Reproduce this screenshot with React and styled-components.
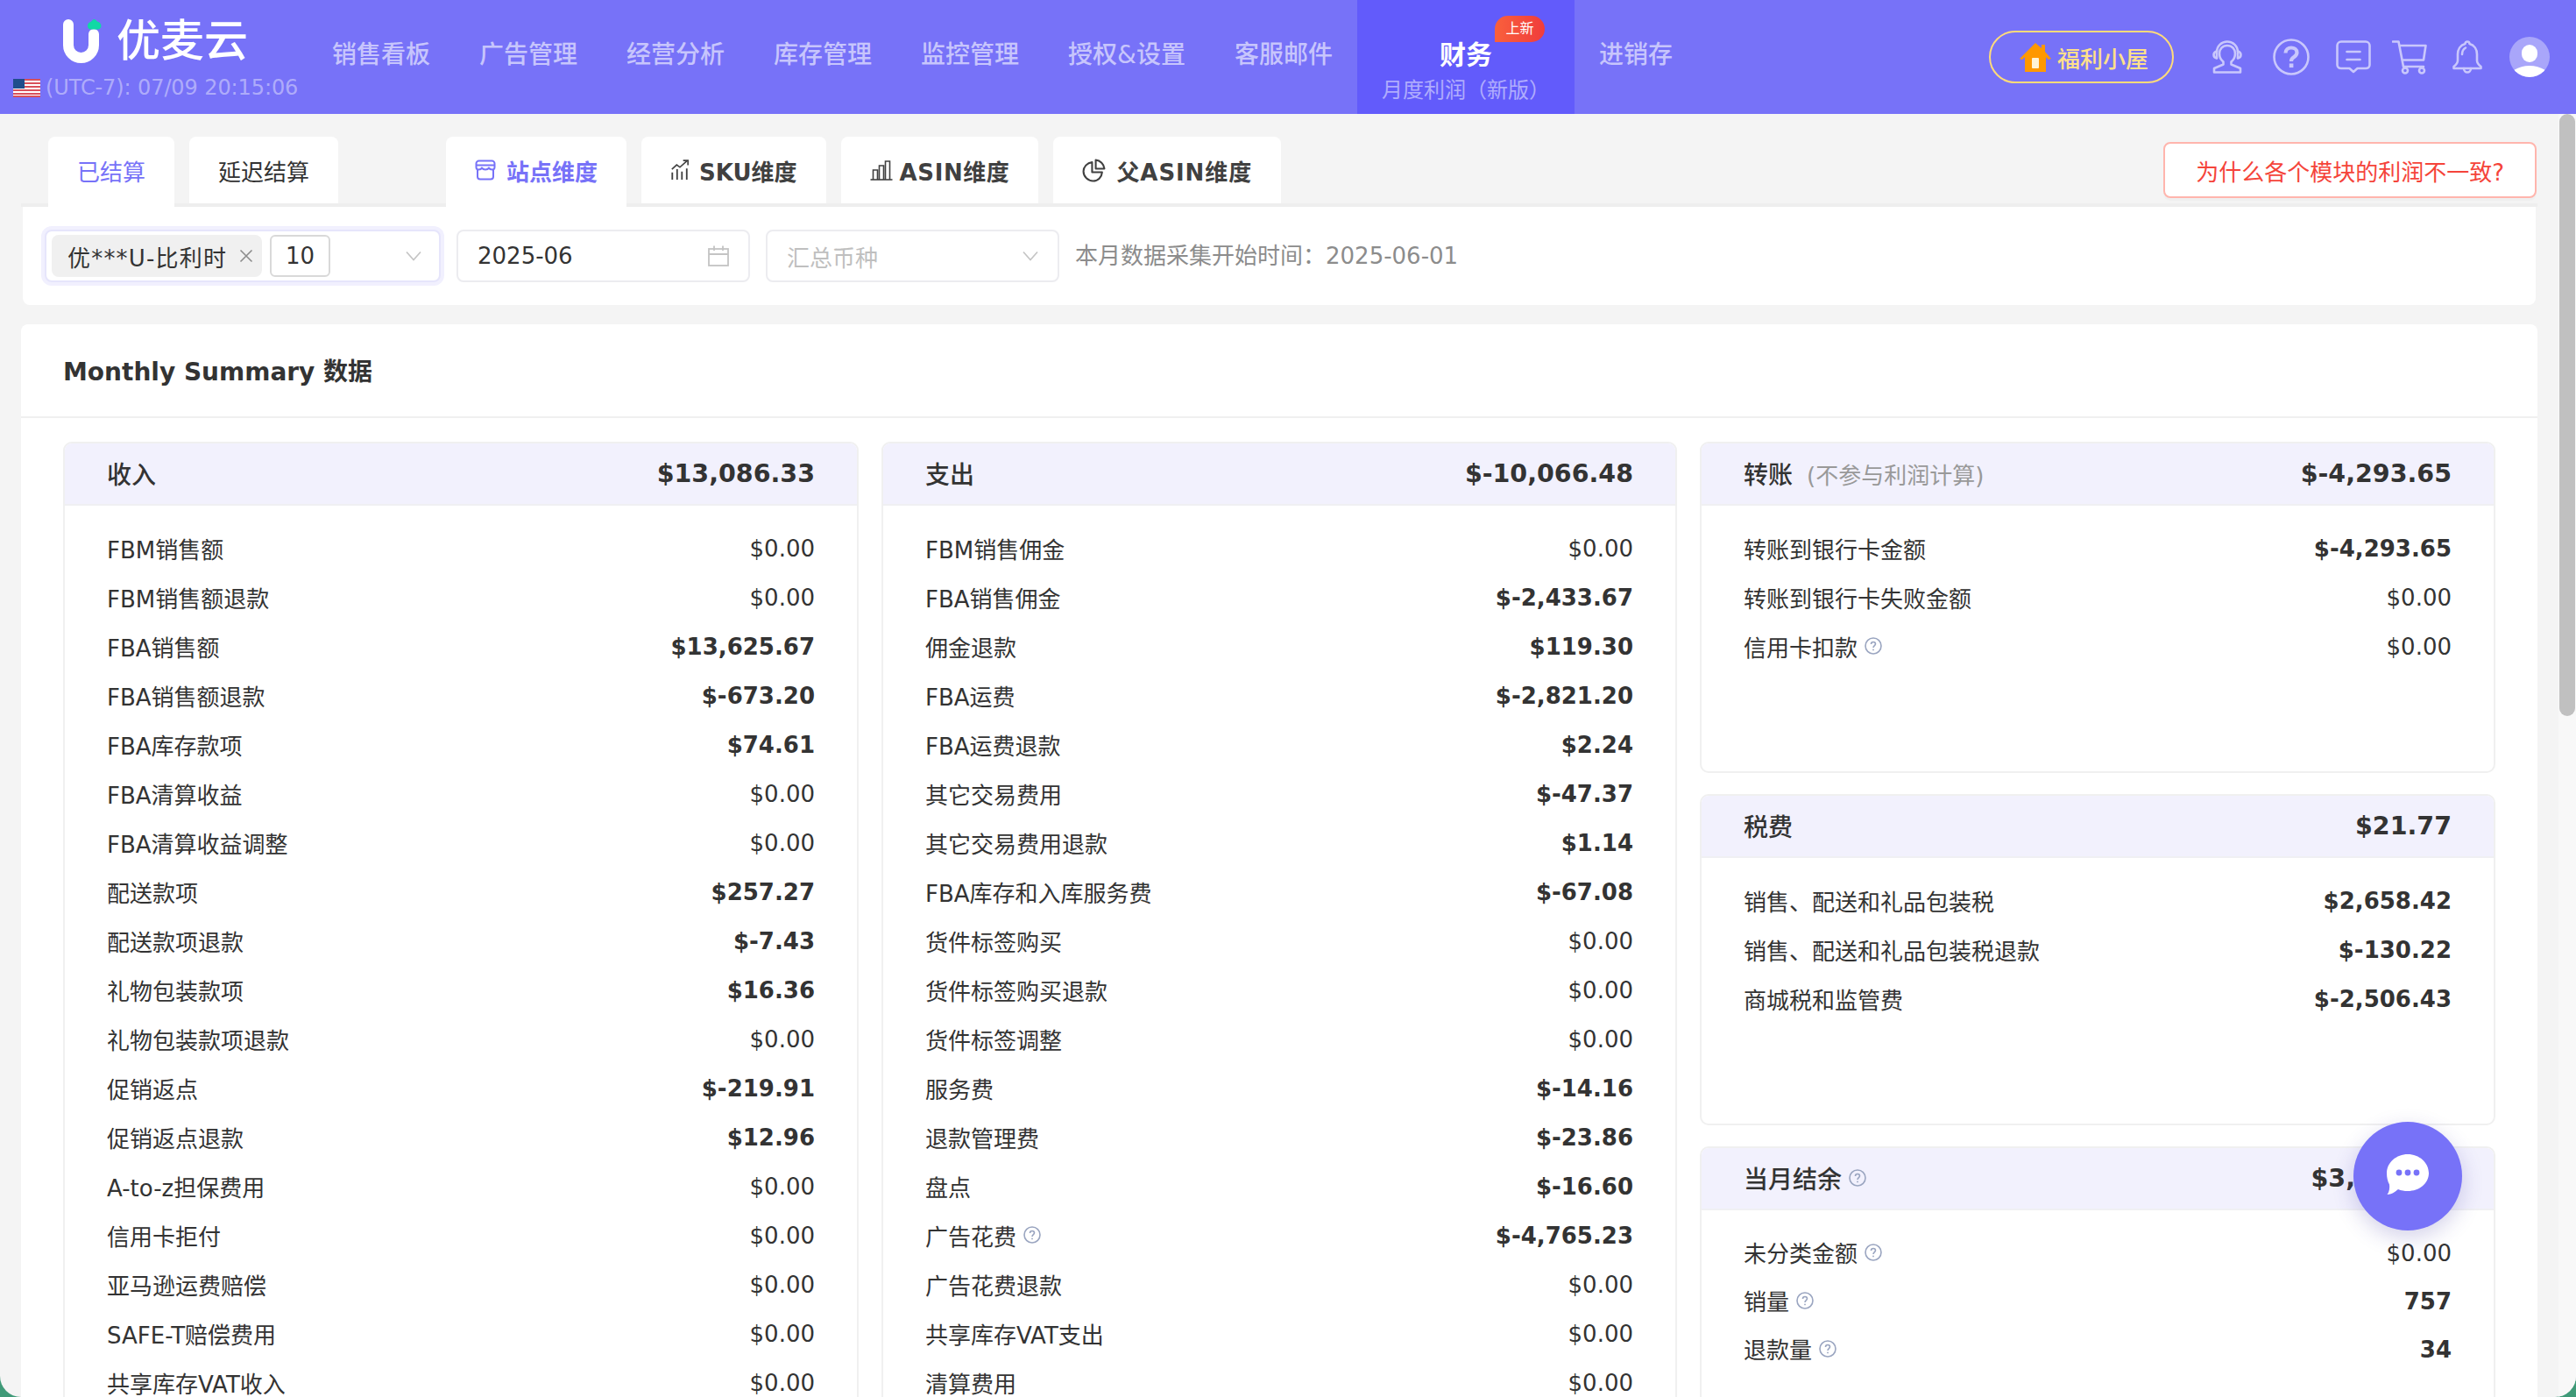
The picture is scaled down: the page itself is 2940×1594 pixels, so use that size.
import React from "react";
import styled, { createGlobalStyle } from "styled-components";

const PURPLE = "#7772f8";

const Global = createGlobalStyle`
  html, body { margin: 0; height: 100%; background: #3f9a78; }
  #root { height: 100%; }
  * { box-sizing: border-box; }
  body { font-family: "DejaVu Sans", "Noto Sans CJK SC", sans-serif; color: #333; }
`;

const Frame = styled.div`
  position: relative;
  height: 100vh;
  display: flex;
  flex-direction: column;
  overflow: hidden;
  border-radius: 0 0 24px 24px;
  background: #f4f4f4;
`;

/* ---------- header ---------- */
const Header = styled.header`
  height: 130px;
  flex: none;
  display: flex;
  align-items: stretch;
  background: ${PURPLE};
`;
const Brand = styled.div`
  width: 351px;
  flex: none;
  display: flex;
  flex-direction: column;
`;
const LogoRow = styled.div`
  display: flex;
  align-items: flex-start;
  gap: 17px;
  padding: 22px 0 0 72px;
  height: 86px;
`;
const LogoText = styled.span`
  font-size: 50px;
  font-weight: 500;
  line-height: 50px;
  color: #fff;
`;
const ClockRow = styled.div`
  display: flex;
  align-items: center;
  gap: 6px;
  padding-left: 15px;
  font-size: 24px;
  letter-spacing: -0.1px;
  line-height: 28px;
  color: rgba(255, 255, 255, 0.42);
  white-space: nowrap;
`;
const Nav = styled.nav`
  display: flex;
  align-items: stretch;
`;
const NavItem = styled.div`
  position: relative;
  display: flex;
  flex-direction: column;
  align-items: center;
  padding: 43px 28px 0;
  font-size: 28px;
  font-weight: 500;
  line-height: 40px;
  white-space: nowrap;
  color: ${(p) => (p.$active ? "#fff" : "rgba(255,255,255,0.6)")};
  background: ${(p) => (p.$active ? "#625bfb" : "transparent")};
`;
const NavStrong = styled.span`
  font-size: 30px;
  font-weight: 700;
`;
const NavSub = styled.span`
  font-size: 24px;
  font-weight: 400;
  line-height: 40px;
  color: rgba(255, 255, 255, 0.5);
`;
const NewBadge = styled.span`
  position: absolute;
  left: 157px;
  top: 18px;
  width: 57px;
  height: 30px;
  border-radius: 15px 15px 15px 0;
  background: linear-gradient(90deg, #f9603c, #f03c3c);
  color: #fff;
  font-size: 16px;
  font-weight: 400;
  line-height: 30px;
  text-align: center;
`;
const HeaderRight = styled.div`
  margin-left: auto;
  display: flex;
  align-items: center;
  padding: 0 30px 0 0;
  height: 130px;
`;
const WelfareButton = styled.div`
  display: flex;
  align-items: center;
  gap: 7px;
  height: 60px;
  width: 211px;
  padding-left: 33px;
  margin-right: 44px;
  border: 2px solid #ffdb7a;
  border-radius: 30px;
  color: #ffe08a;
  font-size: 26px;
  font-weight: 500;
  white-space: nowrap;
`;
const IconSlot = styled.span`
  display: flex;
  margin-right: ${(p) => p.$gap || 0}px;
  color: #c9c7fc;
`;

/* ---------- page body ---------- */
const BodyRow = styled.div`
  flex: 1;
  min-height: 0;
  display: flex;
`;
const Scroller = styled.main`
  flex: 1;
  min-width: 0;
  overflow: hidden;
  padding: 26px 24px 0;
`;
const ScrollRail = styled.div`
  flex: none;
  width: 20px;
  background: #f8f8f8;
`;
const ScrollThumb = styled.div`
  width: 18px;
  height: 687px;
  margin-left: 1px;
  background: #c0c0c0;
  border-radius: 9px;
`;
const TabsBar = styled.div`
  display: flex;
  align-items: flex-start;
  height: 80px;
  border-bottom: 4px solid #eeeeee;
  padding-left: 31px;
`;
const TabGroup = styled.div`
  display: flex;
  gap: 17px;
  margin-right: ${(p) => p.$gap || 0}px;
`;
const Tab = styled.div`
  display: flex;
  align-items: center;
  gap: ${(p) => p.$gap ?? 10}px;
  height: ${(p) => (p.$active ? "80px" : "76px")};
  padding: ${(p) => (p.$active ? "0 33px 4px" : "0 33px")};
  background: #fff;
  border-radius: 8px 8px 0 0;
  font-size: 26px;
  font-weight: ${(p) => (p.$bold ? 700 : 400)};
  letter-spacing: ${(p) => p.$track || 0}px;
  color: ${(p) => (p.$active ? PURPLE : p.$bold ? "#404040" : "#333")};
  white-space: nowrap;
`;
const WhyButton = styled.div`
  margin: 6px 1px 0 auto;
  height: 64px;
  padding: 0 35px;
  display: flex;
  align-items: center;
  background: #fff;
  border: 2px solid #ffb5ad;
  border-radius: 8px;
  box-shadow: 0 3px 0 rgba(0, 0, 0, 0.02);
  color: #f5443a;
  font-size: 26px;
  white-space: nowrap;
`;
const FilterCard = styled.section`
  height: 112px;
  margin: 0 2px;
  padding: 26px 25px;
  display: flex;
  align-items: flex-start;
  gap: 18px;
  background: #fff;
  border-radius: 0 0 8px 8px;
`;
const Field = styled.div`
  display: flex;
  align-items: center;
  height: 60px;
  width: ${(p) => p.$w}px;
  padding: ${(p) => p.$pad || "0 22px"};
  background: #fff;
  border: 2px solid ${(p) => (p.$focus ? "#e6e5fb" : "#ececf0")};
  border-radius: 8px;
  font-size: 26px;
  color: ${(p) => (p.$muted ? "#bfbfbf" : "#333")};
  box-shadow: ${(p) => (p.$focus ? "0 0 0 4px #f1f0fe" : "none")};
`;
const ChosenTag = styled.span`
  display: flex;
  align-items: center;
  justify-content: space-between;
  width: 240px;
  height: 48px;
  padding: 0 10px 0 18px;
  background: #f0f0f0;
  border-radius: 8px;
  font-size: 26px;
  letter-spacing: 1.2px;
  white-space: nowrap;
`;
const CountBox = styled.span`
  display: flex;
  align-items: center;
  justify-content: center;
  width: 69px;
  height: 48px;
  margin-left: 9px;
  border: 2px solid #d9d9d9;
  border-radius: 6px;
  font-size: 26px;
`;
const FieldIcon = styled.span`
  display: flex;
  margin-left: auto;
  color: #c4c4c4;
`;
const Info = styled.span`
  height: 60px;
  line-height: 60px;
  font-size: 26px;
  color: #8c8c8c;
  white-space: nowrap;
`;
const SummaryCard = styled.section`
  margin-top: 22px;
  min-height: 2700px;
  background: #fff;
  border-radius: 8px;
  display: flex;
  flex-direction: column;
`;
const SummaryTitle = styled.h2`
  margin: 0;
  height: 107px;
  padding: 0 48px 2px;
  display: flex;
  align-items: center;
  gap: 10px;
  border-bottom: 2px solid #f0f0f0;
  font-size: 28px;
  font-weight: 700;
  color: #333;
`;
const Columns = styled.div`
  flex: 1;
  display: grid;
  grid-template-columns: repeat(3, 1fr);
  gap: 26px;
  padding: 27px 48px 26px;
`;
const Stack = styled.div`
  display: flex;
  flex-direction: column;
  gap: 24px;
`;
const Panel = styled.article`
  flex: ${(p) => (p.$fill ? 1 : "none")};
  height: ${(p) => (p.$h ? `${p.$h}px` : "auto")};
  border: 2px solid #f0f0f0;
  border-radius: 10px;
  overflow: hidden;
`;
const PanelHead = styled.header`
  height: 72px;
  margin: -1px 0 0;
  padding: 0 48px;
  display: flex;
  align-items: center;
  justify-content: space-between;
  background: #f2f1fd;
  border-bottom: 2px solid #f0f0f3;
  font-size: 28px;
  font-weight: 500;
  white-space: nowrap;
`;
const HeadLabel = styled.span`
  display: flex;
  align-items: center;
  gap: 8px;
`;
const HeadNote = styled.span`
  margin-left: 8px;
  font-size: 26px;
  font-weight: 400;
  color: #999;
`;
const HeadValue = styled.span`
  font-size: 28.5px;
  font-weight: 700;
  color: #333;
`;
const PanelBody = styled.div`
  padding: 20px 48px;
`;
const Row = styled.div`
  height: ${(p) => p.$h || 56}px;
  display: flex;
  align-items: center;
  justify-content: space-between;
  font-size: 26px;
  color: #333;
  white-space: nowrap;
`;
const RowLabel = styled.span`
  display: flex;
  align-items: center;
  gap: 8px;
`;
const RowValue = styled.span`
  padding-top: 2px;
  font-weight: ${(p) => (p.$bold ? 700 : 400)};
`;

/* ---------- overlays ---------- */
const WatermarkLayer = styled.div`
  position: absolute;
  left: -40px;
  right: 0;
  top: 130px;
  bottom: 0;
  display: flex;
  overflow: hidden;
  pointer-events: none;
`;
const WatermarkColumn = styled.div`
  flex: none;
  width: 145px;
  margin-top: ${(p) => p.$offset}px;
`;
const WatermarkText = styled.div`
  height: 110px;
  display: flex;
  align-items: center;
  justify-content: center;
  font-size: 24px;
  color: rgba(0, 0, 0, 0.022);
  transform: rotate(-32deg);
`;
const ChatFab = styled.div`
  position: absolute;
  left: 2686px;
  top: 1280px;
  width: 124px;
  height: 124px;
  display: flex;
  align-items: center;
  justify-content: center;
  border-radius: 50%;
  background: ${PURPLE};
  box-shadow: 0 8px 24px rgba(60, 50, 160, 0.22);
`;

/* ---------- icons ---------- */
const LogoMark = () => (
  <svg width="44" height="52" viewBox="0 0 44 52">
    <path d="M6 6V29.5A14.5 14.5 0 0 0 35 29.5V17" fill="none" stroke="#fff" strokeWidth="12" strokeLinecap="round" />
    <path d="M35.5 0C37 0 38 1.5 39 2.5C41.5 3 43.5 5 43.5 7.5C43.5 10 41.5 11.5 39.5 11.5H31.5C29.5 11.5 28 10 28 7.5C28 5 29.5 3.5 31.5 3C33 1.5 34 0 35.5 0Z" fill="#10d9a5" />
  </svg>
);
const Flag = () => (
  <svg width="31" height="21" viewBox="0 0 31 21">
    <rect width="31" height="21" fill="#fff" />
    {[0, 4, 8, 12, 16].map((y) => (
      <rect key={y} y={y} width="31" height="2" fill="#d8505a" />
    ))}
    <rect y="19" width="31" height="2" fill="#d8505a" />
    <rect width="13" height="11" fill="#1f4e8c" />
  </svg>
);
const House = () => (
  <svg width="36" height="34" viewBox="0 0 36 34">
    <path d="M18 1L25 7V3H29V11L36 19L33 20L30 17V34H6V17L3 20L0 19Z" fill="#ff9800" />
    <rect x="14" y="18" width="8" height="12" rx="1" fill="#fff3d6" />
  </svg>
);
const Headset = () => (
  <svg width="34" height="38" viewBox="0 0 34 38" fill="none" stroke="currentColor" strokeWidth="2.6" strokeLinejoin="round" strokeLinecap="round">
    <path d="M17 6C11.5 6 8 10 8 15C8 19.5 10 22.5 12.5 24.5V27.5L2 32V36.5H32V32L21.5 27.5V24.5C24 22.5 26 19.5 26 15C26 10 22.5 6 17 6Z" />
    <path d="M5 20V13.5C5 6.5 10.5 1.5 17 1.5C23.5 1.5 29 6.5 29 13.5V20" />
    <path d="M5 12.5C3 13 1.5 14.5 1.5 16.5C1.5 18.5 3 20 5 20.5M29 12.5C31 13 32.5 14.5 32.5 16.5C32.5 18.5 31 20 29 20.5" />
  </svg>
);
const HelpRound = () => (
  <svg width="42" height="42" viewBox="0 0 42 42" fill="none" stroke="currentColor">
    <circle cx="21" cy="21" r="19.5" strokeWidth="2.6" />
    <path d="M14.5 16.5C14.5 12.5 17.5 10.5 21 10.5C24.5 10.5 27.5 12.5 27.5 16C27.5 19 25.5 20 23.5 21.5C22 22.5 21 23.5 21 26" strokeWidth="4.2" />
    <rect x="18.8" y="28.5" width="4.6" height="4.6" fill="currentColor" stroke="none" />
  </svg>
);
const MessageBox = () => (
  <svg width="40" height="38" viewBox="0 0 40 38" fill="none" stroke="currentColor" strokeWidth="2.6" strokeLinejoin="round" strokeLinecap="round">
    <path d="M6 1.5H34C36.5 1.5 38.5 3.5 38.5 6V28C38.5 30.5 36.5 32 34 32H24.5L20 36L15.5 32H6C3.5 32 1.5 30.5 1.5 28V6C1.5 3.5 3.5 1.5 6 1.5Z" />
    <path d="M12.5 13H27.5M12.5 22H27.5" />
  </svg>
);
const Cart = () => (
  <svg width="40" height="39" viewBox="0 0 40 39" fill="none" stroke="currentColor" strokeWidth="2.6" strokeLinejoin="round" strokeLinecap="round">
    <path d="M1 1.5H7.5L13 30H36" />
    <path d="M9 6H38.5L36 22.5H12" />
    <circle cx="15" cy="34.5" r="3" />
    <circle cx="34" cy="34.5" r="3" />
  </svg>
);
const Bell = () => (
  <svg width="34" height="38" viewBox="0 0 34 38" fill="none" stroke="currentColor" strokeWidth="2.6" strokeLinejoin="round" strokeLinecap="round">
    <path d="M17 1.5C18.5 1.5 19.5 2.5 19.5 4C25 5.5 28 10.5 28 16V23C28 26 30 28 32.5 30V32H1.5V30C4 28 6 26 6 23V16C6 10.5 9 5.5 14.5 4C14.5 2.5 15.5 1.5 17 1.5Z" />
    <path d="M13 32C13 35 15 36.5 17 36.5C19 36.5 21 35 21 32" />
    <path d="M11 16C11 12.5 12.5 10 15 8.5" />
  </svg>
);
const Avatar = () => (
  <svg width="46" height="46" viewBox="0 0 46 46">
    <defs>
      <clipPath id="avatarClip"><circle cx="23" cy="23" r="23" /></clipPath>
    </defs>
    <circle cx="23" cy="23" r="23" fill="#a9a6fa" />
    <rect x="14" y="9" width="18" height="20" rx="9" fill="#fff" />
    <ellipse cx="23" cy="48" rx="24" ry="15" fill="#fff" clipPath="url(#avatarClip)" />
  </svg>
);
const StoreIcon = () => (
  <svg width="24" height="24" viewBox="0 0 24 24" fill="none" stroke="currentColor" strokeWidth="2" strokeLinejoin="round">
    <path d="M4.5 1.5H19.5C21 1.5 22.5 3 22.5 4.5V9C22.5 10.5 21 11.5 19.5 11.5C18 11.5 16.5 10.5 16 9.5C15.5 10.5 13.8 11.5 12 11.5C10.2 11.5 8.5 10.5 8 9.5C7.5 10.5 6 11.5 4.5 11.5C3 11.5 1.5 10.5 1.5 9V4.5C1.5 3 3 1.5 4.5 1.5Z" />
    <path d="M1.5 6.5H22.5" />
    <path d="M3 11.5V19.5C3 21.3 4.2 22.5 6 22.5H18C19.8 22.5 21 21.3 21 19.5V11.5" />
  </svg>
);
const TrendIcon = () => (
  <svg width="22" height="24" viewBox="0 0 24 26" fill="none" stroke="currentColor" strokeWidth="2">
    <path d="M2 12L8 6.5L12 9.5L21 1.5" strokeWidth="1.8" />
    <path d="M16 1.2H22V7" strokeWidth="1.8" />
    <path d="M2.5 16V25M8.5 12V25M14.5 15V25M20.5 11V25" />
  </svg>
);
const BarsIcon = () => (
  <svg width="26" height="24" viewBox="0 0 26 24" fill="none" stroke="currentColor" strokeWidth="1.6">
    <path d="M0.5 23H25.5" />
    <path d="M3.5 23V12H8.5V23M10.5 23V7H15.5V23M17.5 23V2H22.5V23" />
  </svg>
);
const PieIcon = () => (
  <svg width="27" height="27" viewBox="0 0 26 26" fill="none" stroke="currentColor" strokeWidth="2" strokeLinejoin="round">
    <path d="M11 4C5.5 4.5 1.5 9 1.5 14C1.5 20 6.5 24.5 12 24.5C17.5 24.5 21.5 20.5 22 15H11Z" />
    <path d="M15 1.5C20 2 24 6 24.5 11H15Z" />
  </svg>
);
const Chevron = () => (
  <svg width="18" height="12" viewBox="0 0 18 12" fill="none" stroke="currentColor" strokeWidth="1.6">
    <path d="M1 1.5L9 10.5L17 1.5" />
  </svg>
);
const Cross = () => (
  <svg width="16" height="16" viewBox="0 0 16 16" fill="none" stroke="#8c8c8c" strokeWidth="1.6">
    <path d="M1.5 1.5L14.5 14.5M14.5 1.5L1.5 14.5" />
  </svg>
);
const CalendarIcon = () => (
  <svg width="24" height="24" viewBox="0 0 24 24" fill="none" stroke="currentColor" strokeWidth="1.8">
    <rect x="1" y="4" width="22" height="19" />
    <path d="M1 10H23M7 0.5V6M17 0.5V6" />
  </svg>
);
const HelpTip = () => (
  <svg width="20" height="20" viewBox="0 0 20 20" fill="none" stroke="#9aa5c0" strokeWidth="1.6">
    <circle cx="10" cy="10" r="9" />
    <path d="M7.5 8C7.5 6.5 8.6 5.5 10 5.5C11.4 5.5 12.5 6.5 12.5 7.8C12.5 9.5 10 9.8 10 12" />
    <circle cx="10" cy="14.4" r="0.9" fill="#9aa5c0" stroke="none" />
  </svg>
);
const ChatBubble = () => (
  <svg width="48" height="50" viewBox="0 0 48 50">
    <path d="M24 0C37 0 48 9.5 48 21.5C48 33.5 37 42 24 42C20 42 16.5 41.5 13 40C9.5 43 5 46 0.5 46C3 43 3.5 38 3 34.5C1 31 0 26.5 0 21.5C0 9.5 11 0 24 0Z" fill="#fff" />
    <circle cx="14" cy="21" r="3.4" fill={PURPLE} />
    <circle cx="24" cy="21" r="3.4" fill={PURPLE} />
    <circle cx="34" cy="21" r="3.4" fill={PURPLE} />
  </svg>
);

/* ---------- data ---------- */
const NAV = ["销售看板", "广告管理", "经营分析", "库存管理", "监控管理", "授权&设置", "客服邮件"];

const b = (label, value, help) => ({ label, value, bold: true, help });
const z = (label, help) => ({ label, value: "$0.00", bold: false, help });

const INCOME = [
  z("FBM销售额"), z("FBM销售额退款"), b("FBA销售额", "$13,625.67"), b("FBA销售额退款", "$-673.20"),
  b("FBA库存款项", "$74.61"), z("FBA清算收益"), z("FBA清算收益调整"), b("配送款项", "$257.27"),
  b("配送款项退款", "$-7.43"), b("礼物包装款项", "$16.36"), z("礼物包装款项退款"), b("促销返点", "$-219.91"),
  b("促销返点退款", "$12.96"), z("A-to-z担保费用"), z("信用卡拒付"), z("亚马逊运费赔偿"),
  z("SAFE-T赔偿费用"), z("共享库存VAT收入"),
];
const EXPENSE = [
  z("FBM销售佣金"), b("FBA销售佣金", "$-2,433.67"), b("佣金退款", "$119.30"), b("FBA运费", "$-2,821.20"),
  b("FBA运费退款", "$2.24"), b("其它交易费用", "$-47.37"), b("其它交易费用退款", "$1.14"), b("FBA库存和入库服务费", "$-67.08"),
  z("货件标签购买"), z("货件标签购买退款"), z("货件标签调整"), b("服务费", "$-14.16"),
  b("退款管理费", "$-23.86"), b("盘点", "$-16.60"), b("广告花费", "$-4,765.23", true), z("广告花费退款"),
  z("共享库存VAT支出"), z("清算费用"),
];
const TRANSFER = [b("转账到银行卡金额", "$-4,293.65"), z("转账到银行卡失败金额"), z("信用卡扣款", true)];
const TAX = [
  b("销售、配送和礼品包装税", "$2,658.42"), b("销售、配送和礼品包装税退款", "$-130.22"), b("商城税和监管费", "$-2,506.43"),
];
const BALANCE = [z("未分类金额", true), b("销量", "757", true), b("退款量", "34", true)];

const Rows = ({ items, h }) => (
  <PanelBody>
    {items.map((r) => (
      <Row key={r.label} $h={h}>
        <RowLabel>
          {r.label}
          {r.help && <HelpTip />}
        </RowLabel>
        <RowValue $bold={r.bold}>{r.value}</RowValue>
      </Row>
    ))}
  </PanelBody>
);

const Watermark = () => (
  <WatermarkLayer>
    {Array.from({ length: 20 }, (_, k) => (
      <WatermarkColumn key={k} $offset={k % 2 ? 22 : 65}>
        {Array.from({ length: k % 2 ? 13 : 12 }, (_, n) => (
          <WatermarkText key={n}>17185</WatermarkText>
        ))}
      </WatermarkColumn>
    ))}
  </WatermarkLayer>
);

export default function App() {
  return (
    <Frame>
      <Global />
      <Header>
        <Brand>
          <LogoRow>
            <LogoMark />
            <LogoText>优麦云</LogoText>
          </LogoRow>
          <ClockRow>
            <Flag />
            (UTC-7): 07/09 20:15:06
          </ClockRow>
        </Brand>
        <Nav>
          {NAV.map((n) => (
            <NavItem key={n}>{n}</NavItem>
          ))}
          <NavItem $active>
            <NavStrong>财务</NavStrong>
            <NavSub>月度利润（新版）</NavSub>
            <NewBadge>上新</NewBadge>
          </NavItem>
          <NavItem>进销存</NavItem>
        </Nav>
        <HeaderRight>
          <WelfareButton>
            <House />
            福利小屋
          </WelfareButton>
          <IconSlot $gap={35}><Headset /></IconSlot>
          <IconSlot $gap={30}><HelpRound /></IconSlot>
          <IconSlot $gap={24}><MessageBox /></IconSlot>
          <IconSlot $gap={29}><Cart /></IconSlot>
          <IconSlot $gap={31}><Bell /></IconSlot>
          <IconSlot><Avatar /></IconSlot>
        </HeaderRight>
      </Header>
      <BodyRow>
        <Scroller>
          <TabsBar>
            <TabGroup $gap={123}>
              <Tab $active>已结算</Tab>
              <Tab>延迟结算</Tab>
            </TabGroup>
            <TabGroup>
              <Tab $active $bold $gap={12}><StoreIcon />站点维度</Tab>
              <Tab $bold $gap={11}><TrendIcon />SKU维度</Tab>
              <Tab $bold $gap={8} $track={0.6}><BarsIcon />ASIN维度</Tab>
              <Tab $bold $gap={12} $track={0.9}><PieIcon />父ASIN维度</Tab>
            </TabGroup>
            <WhyButton>为什么各个模块的利润不一致?</WhyButton>
          </TabsBar>
          <FilterCard>
            <Field $w={452} $focus $pad="0 20px 0 6px">
              <ChosenTag>优***U-比利时<Cross /></ChosenTag>
              <CountBox>10</CountBox>
              <FieldIcon><Chevron /></FieldIcon>
            </Field>
            <Field $w={335}>
              2025-06
              <FieldIcon><CalendarIcon /></FieldIcon>
            </Field>
            <Field $w={335} $muted>
              汇总币种
              <FieldIcon><Chevron /></FieldIcon>
            </Field>
            <Info>本月数据采集开始时间：2025-06-01</Info>
          </FilterCard>
          <SummaryCard>
            <SummaryTitle>Monthly Summary 数据</SummaryTitle>
            <Columns>
              <Panel>
                <PanelHead><HeadLabel>收入</HeadLabel><HeadValue>$13,086.33</HeadValue></PanelHead>
                <Rows items={INCOME} />
              </Panel>
              <Panel>
                <PanelHead><HeadLabel>支出</HeadLabel><HeadValue>$-10,066.48</HeadValue></PanelHead>
                <Rows items={EXPENSE} />
              </Panel>
              <Stack>
                <Panel $h={378}>
                  <PanelHead>
                    <HeadLabel>转账<HeadNote>(不参与利润计算)</HeadNote></HeadLabel>
                    <HeadValue>$-4,293.65</HeadValue>
                  </PanelHead>
                  <Rows items={TRANSFER} />
                </Panel>
                <Panel $h={378}>
                  <PanelHead><HeadLabel>税费</HeadLabel><HeadValue>$21.77</HeadValue></PanelHead>
                  <Rows items={TAX} />
                </Panel>
                <Panel $fill>
                  <PanelHead><HeadLabel>当月结余<HelpTip /></HeadLabel><HeadValue>$3,020.18</HeadValue></PanelHead>
                  <Rows items={BALANCE} h={55} />
                </Panel>
              </Stack>
            </Columns>
          </SummaryCard>
        </Scroller>
        <ScrollRail><ScrollThumb /></ScrollRail>
      </BodyRow>
      <Watermark />
      <ChatFab><ChatBubble /></ChatFab>
    </Frame>
  );
}
